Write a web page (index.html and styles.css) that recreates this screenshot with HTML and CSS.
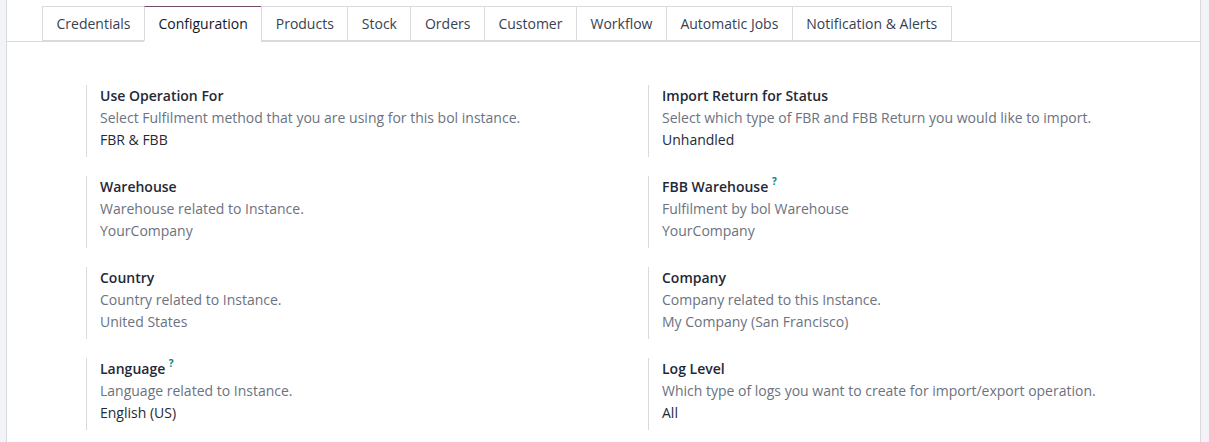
FILE: index.html
```html
<!DOCTYPE html>
<html lang="en">
  <head>
    <meta charset="UTF-8" />
    <meta name="viewport" content="width=device-width, initial-scale=1.0" />
    <title>bol Instance - Configuration</title>
    <link rel="stylesheet" href="styles.css">
  </head>
  <body>
    <div class="sheet">
      <ul class="tabs">
        <li class="tab">Credentials</li>
        <li class="tab active">Configuration</li>
        <li class="tab">Products</li>
        <li class="tab">Stock</li>
        <li class="tab">Orders</li>
        <li class="tab">Customer</li>
        <li class="tab">Workflow</li>
        <li class="tab">Automatic Jobs</li>
        <li class="tab">Notification &amp; Alerts</li>
      </ul>

      <div class="settings">
        <div class="setting">
          <div class="label">Use Operation For</div>
          <div class="help">Select Fulfilment method that you are using for this bol instance.</div>
          <div class="value">FBR &amp; FBB</div>
        </div>
        <div class="setting">
          <div class="label">Import Return for Status</div>
          <div class="help">Select which type of FBR and FBB Return you would like to import.</div>
          <div class="value">Unhandled</div>
        </div>

        <div class="setting">
          <div class="label">Warehouse</div>
          <div class="help">Warehouse related to Instance.</div>
          <div class="value link">YourCompany</div>
        </div>
        <div class="setting">
          <div class="label">FBB Warehouse <sup class="tip">?</sup></div>
          <div class="help">Fulfilment by bol Warehouse</div>
          <div class="value link">YourCompany</div>
        </div>

        <div class="setting">
          <div class="label">Country</div>
          <div class="help">Country related to Instance.</div>
          <div class="value link">United States</div>
        </div>
        <div class="setting">
          <div class="label">Company</div>
          <div class="help">Company related to this Instance.</div>
          <div class="value link">My Company (San Francisco)</div>
        </div>

        <div class="setting">
          <div class="label">Language <sup class="tip">?</sup></div>
          <div class="help">Language related to Instance.</div>
          <div class="value">English (US)</div>
        </div>
        <div class="setting">
          <div class="label">Log Level</div>
          <div class="help">Which type of logs you want to create for import/export operation.</div>
          <div class="value">All</div>
        </div>
      </div>
    </div>
  </body>
</html>
```

FILE: styles.css
```css
body {
  font-family: "Open Sans", "Liberation Sans", sans-serif;
  font-size: 14px;
  background-color: #f2f3f7;
  margin: 0;
  padding: 0;
  overflow: hidden;
}
.sheet {
  background-color: #fff;
  margin: 0 8px 0 6px;
  border-left: 1px solid #d8dadd;
  border-right: 1px solid #d8dadd;
  min-height: 442px;
}
.tabs {
  list-style: none;
  margin: 0;
  padding: 6px 0 0 35px;
  display: flex;
  border-bottom: 1px solid #d8dadd;
}
.tab {
  height: 33px;
  line-height: 33px;
  padding: 0 13.5px;
  color: #374151;
  font-size: 14px;
  border: 1px solid #d8dadd;
  border-right: none;
  border-bottom: 2px solid #d8dadd;
  margin-bottom: -1px;
}
.tab:last-child {
  border-right: 1px solid #d8dadd;
}
.tab.active {
  color: #111827;
  border-top: 1px solid #714b67;
  border-bottom: 2px solid #fff;
}
.settings {
  display: grid;
  grid-template-columns: 562px 1fr;
  row-gap: 19px;
  padding: 43px 0 0 79px;
}
.setting {
  border-left: 1px solid #d8dadd;
  padding: 0 0 6px 13px;
  line-height: 22px;
}
.label {
  font-weight: 600;
  color: #1f2937;
}
.help {
  color: #6b7280;
}
.value {
  color: #1f2937;
}
.value.link {
  color: #6b7280;
}
.tip {
  color: #017e84;
  font-size: 10px;
  font-weight: 700;
  vertical-align: top;
  position: relative;
  top: -6px;
}
```
